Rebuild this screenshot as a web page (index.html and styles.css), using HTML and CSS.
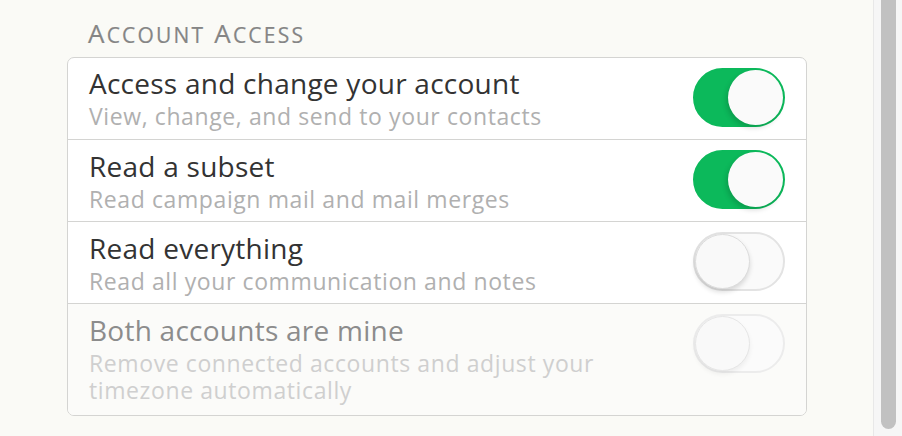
FILE: index.html
```html
<!DOCTYPE html>
<html>
<head>
<meta charset="utf-8">
<link rel="stylesheet" href="styles.css">
</head>
<body>
<div class="page">
  <div class="content">
    <h2 class="section-title"><span class="big">A</span><span class="sm">ccount</span> <span class="big">A</span><span class="sm">ccess</span></h2>
    <div class="card">
      <div class="row">
        <div class="text">
          <div class="title">Access and change your account</div>
          <div class="desc">View, change, and send to your contacts</div>
        </div>
        <div class="toggle on"><span class="knob"></span></div>
      </div>
      <div class="row">
        <div class="text">
          <div class="title">Read a subset</div>
          <div class="desc">Read campaign mail and mail merges</div>
        </div>
        <div class="toggle on"><span class="knob"></span></div>
      </div>
      <div class="row">
        <div class="text">
          <div class="title">Read everything</div>
          <div class="desc">Read all your communication and notes</div>
        </div>
        <div class="toggle"><span class="knob"></span></div>
      </div>
      <div class="row disabled">
        <div class="text">
          <div class="title">Both accounts are mine</div>
          <div class="desc">Remove connected accounts and adjust your timezone automatically</div>
        </div>
        <div class="toggle"><span class="knob"></span></div>
      </div>
    </div>
  </div>
  <div class="scrollbar"><div class="thumb"></div></div>
</div>
</body>
</html>
```
FILE: styles.css
```css
html, body {
  margin: 0;
  padding: 0;
  height: 100%;
}
body {
  background: #fafaf6;
  font-family: "Open Sans", "Lato", sans-serif;
  overflow: hidden;
}
.page {
  display: flex;
  height: 436px;
}
.content {
  flex: 1;
  padding: 18px 0 0 67px;
}
.section-title {
  margin: 0 0 9px 21px;
  height: 30px;
  font-size: 26px;
  font-weight: 400;
  color: #858585;
  line-height: 30px;
  letter-spacing: 2.2px;
  -webkit-text-stroke: 0.2px #858585;
}
.section-title .sm {
  font-size: 21px;
  text-transform: uppercase;
}
.card {
  width: 738px;
  border: 1px solid #d4d4d2;
  border-radius: 7px;
  background: #fff;
  overflow: hidden;
}
.row {
  display: flex;
  justify-content: space-between;
  align-items: flex-start;
  padding: 10px 21px 0 21px;
  box-sizing: border-box;
  height: 82px;
  border-top: 1px solid #d4d4d2;
}
.row:first-child {
  border-top: none;
  height: 81px;
  padding-top: 9px;
}
.row .toggle {
  margin-top: 0;
}
.row:first-child .toggle {
  margin-top: 1px;
}
.row.disabled {
  background: #fbfbf9;
  height: 112px;
}
.row.disabled .toggle {
  margin-top: 0;
}
.title {
  font-size: 28px;
  color: #333;
  line-height: 32px;
  letter-spacing: 0.25px;
}
.desc {
  margin-top: 4px;
  font-size: 23px;
  color: #b0b0b0;
  line-height: 27px;
  letter-spacing: 0.6px;
  max-width: 560px;
}
.disabled .title {
  color: #8c8c8c;
}
.disabled .desc {
  color: #cfcfcf;
}
.toggle {
  position: relative;
  width: 92px;
  height: 59px;
  box-sizing: border-box;
  border-radius: 30px;
  border: 2px solid #e3e3e3;
  background: #fafafa;
  flex-shrink: 0;
}
.toggle .knob {
  position: absolute;
  top: 0;
  left: 0;
  width: 55px;
  height: 55px;
  box-sizing: border-box;
  border-radius: 50%;
  background: #f9f9f9;
  border: 1.5px solid #dcdcdc;
  box-shadow: 0 3px 5px rgba(0, 0, 0, 0.14);
}
.toggle.on {
  background: #0cb95b;
  border-color: #0cb95b;
}
.toggle.on .knob {
  left: auto;
  right: 0;
  border: none;
  background: #fafafa;
  box-shadow: -2px 3px 5px rgba(0, 0, 0, 0.15);
}
.disabled .toggle {
  border-color: #ececec;
  background: #fbfbfb;
}
.disabled .toggle .knob {
  border-color: #e6e6e6;
  box-shadow: 0 3px 5px rgba(0, 0, 0, 0.06);
}
.scrollbar {
  width: 29px;
  background: #f6f6f6;
  border-left: 1px solid #e8e8e8;
  padding: 0 6px 0 7px;
  box-sizing: border-box;
  flex-shrink: 0;
}
.thumb {
  height: 429px;
  background: #c1c1c1;
  border-radius: 0 0 8px 8px;
}
```
